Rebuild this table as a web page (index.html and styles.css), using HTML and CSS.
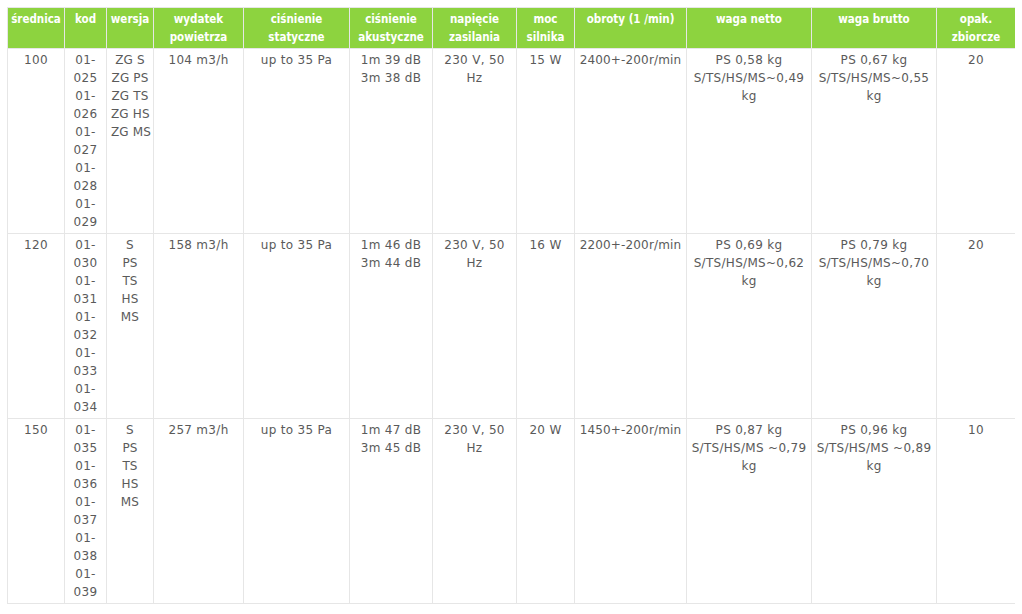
FILE: index.html
```html
<!DOCTYPE html>
<html lang="pl">
<head>
<meta charset="utf-8">
<title>Tabela</title>
<link rel="stylesheet" href="styles.css">
</head>
<body>
<table class="spec">
  <colgroup>
    <col class="c1"><col class="c2"><col class="c3"><col class="c4"><col class="c5"><col class="c6">
    <col class="c7"><col class="c8"><col class="c9"><col class="c10"><col class="c11"><col class="c12">
  </colgroup>
  <thead>
    <tr>
      <th>średnica</th>
      <th>kod</th>
      <th>wersja</th>
      <th>wydatek powietrza</th>
      <th>ciśnienie statyczne</th>
      <th>ciśnienie akustyczne</th>
      <th>napięcie zasilania</th>
      <th>moc silnika</th>
      <th>obroty (1 /min)</th>
      <th>waga netto</th>
      <th>waga brutto</th>
      <th>opak. zbiorcze</th>
    </tr>
  </thead>
  <tbody>
    <tr>
      <td>100</td>
      <td>01-025 01-026 01-027 01-028 01-029</td>
      <td class="nw">ZG S<br>ZG PS<br>ZG TS<br>ZG HS<br>ZG MS</td>
      <td>104 m3/h</td>
      <td>up to 35 Pa</td>
      <td>1m 39 dB<br>3m 38 dB</td>
      <td>230 V, 50 Hz</td>
      <td>15 W</td>
      <td class="nw">2400+-200r/min</td>
      <td>PS 0,58 kg<br>S/TS/HS/MS~0,49 kg</td>
      <td>PS 0,67 kg<br>S/TS/HS/MS~0,55 kg</td>
      <td>20</td>
    </tr>
    <tr>
      <td>120</td>
      <td>01-030 01-031 01-032 01-033 01-034</td>
      <td class="nw">S<br>PS<br>TS<br>HS<br>MS</td>
      <td>158 m3/h</td>
      <td>up to 35 Pa</td>
      <td>1m 46 dB<br>3m 44 dB</td>
      <td>230 V, 50 Hz</td>
      <td>16 W</td>
      <td class="nw">2200+-200r/min</td>
      <td>PS 0,69 kg<br>S/TS/HS/MS~0,62 kg</td>
      <td>PS 0,79 kg<br>S/TS/HS/MS~0,70 kg</td>
      <td>20</td>
    </tr>
    <tr>
      <td>150</td>
      <td>01-035 01-036 01-037 01-038 01-039</td>
      <td class="nw">S<br>PS<br>TS<br>HS<br>MS</td>
      <td>257 m3/h</td>
      <td>up to 35 Pa</td>
      <td>1m 47 dB<br>3m 45 dB</td>
      <td>230 V, 50 Hz</td>
      <td>20 W</td>
      <td class="nw">1450+-200r/min</td>
      <td>PS 0,87 kg<br>S/TS/HS/MS ~0,79 kg</td>
      <td>PS 0,96 kg<br>S/TS/HS/MS ~0,89 kg</td>
      <td>10</td>
    </tr>
  </tbody>
</table>
</body>
</html>
```

FILE: styles.css
```css
html, body {
  background: #ffffff;
}
body {
  margin: 7px;
  font-family: "DejaVu Sans", Verdana, sans-serif;
  font-size: 12px;
  color: #5a5a5a;
}
.spec {
  border-collapse: collapse;
  table-layout: fixed;
  width: 1008px;
}
.c1 { width: 57px; }
.c2 { width: 42px; }
.c3 { width: 47px; }
.c4 { width: 90px; }
.c5 { width: 106px; }
.c6 { width: 83px; }
.c7 { width: 84px; }
.c8 { width: 58px; }
.c9 { width: 112px; }
.c10 { width: 125px; }
.c11 { width: 125px; }
.c12 { width: 79px; }

.spec th,
.spec td {
  border: 1px solid #e6e6e6;
  vertical-align: top;
  text-align: center;
  line-height: 18px;
}
.spec th {
  background: #8dd33f;
  color: #ffffff;
  font-family: "DejaVu Sans Condensed", "DejaVu Sans", sans-serif;
  font-stretch: condensed;
  font-weight: bold;
  font-size: 11.5px;
  padding: 2px 3px 2px;
  height: 35px;
}
.spec td {
  padding: 2px 4px 2px;
  letter-spacing: 0.3px;
}
.spec td.nw {
  white-space: nowrap;
  letter-spacing: 0.15px;
}
```
